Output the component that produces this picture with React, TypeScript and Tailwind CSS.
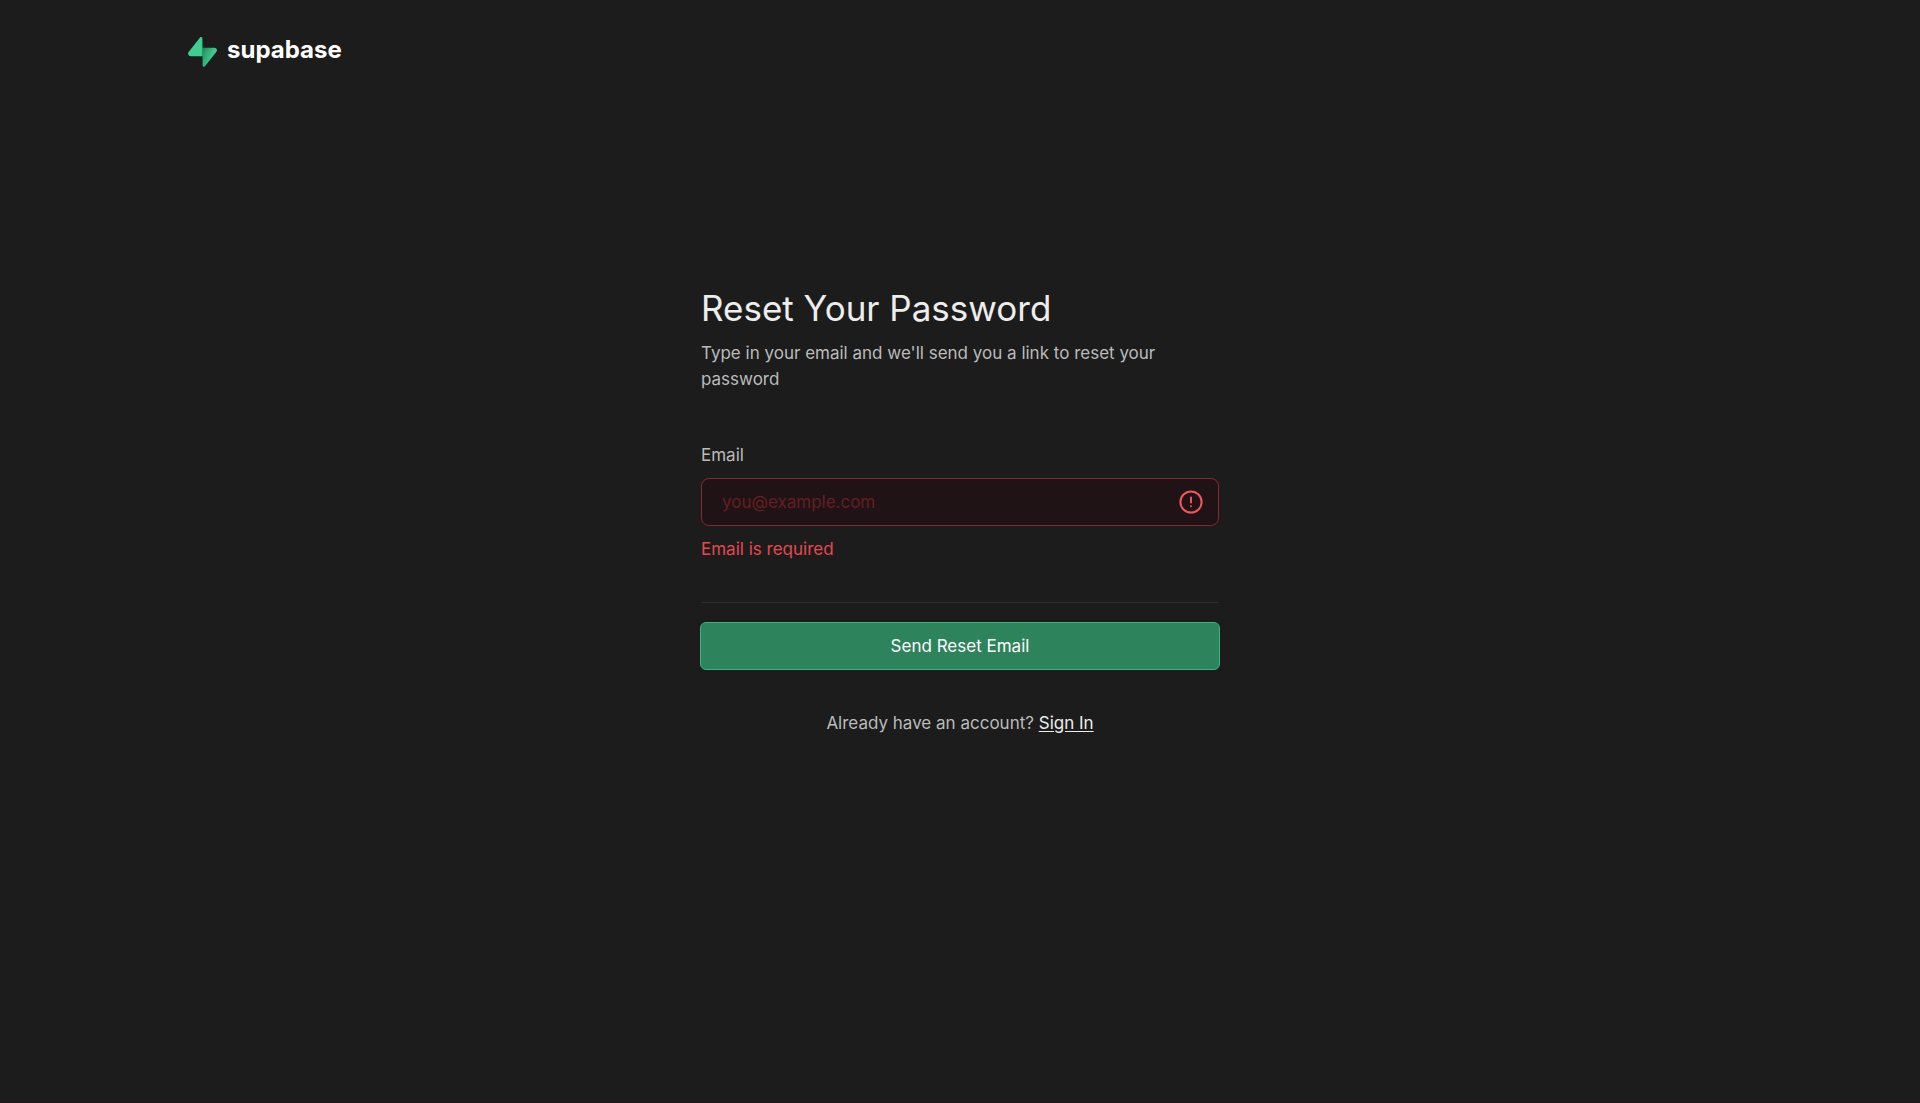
import { useId } from "react";

function Logo() {
  return (
    <a href="#" aria-label="supabase" className="flex items-end gap-[10px]">
      <svg viewBox="0 0 109 113" className="h-[30px] w-[29px]" aria-hidden="true">
        <defs>
          <linearGradient id="bolt" x1="53.97" y1="54.97" x2="94.16" y2="71.83" gradientUnits="userSpaceOnUse">
            <stop stopColor="#249361" />
            <stop offset="1" stopColor="#3ecf8e" />
          </linearGradient>
          <linearGradient id="shade" x1="36.16" y1="30.58" x2="54.48" y2="65.08" gradientUnits="userSpaceOnUse">
            <stop stopOpacity="1" />
            <stop offset="1" stopOpacity="0" />
          </linearGradient>
        </defs>
        <path fill="url(#bolt)" d="M63.7076 110.284C60.8481 113.885 55.0502 111.912 54.9813 107.314L53.9738 40.0627L99.1935 40.0627C107.384 40.0627 111.952 49.5228 106.859 55.9374L63.7076 110.284Z" />
        <path fill="url(#shade)" fillOpacity="0.2" d="M63.7076 110.284C60.8481 113.885 55.0502 111.912 54.9813 107.314L53.9738 40.0627L99.1935 40.0627C107.384 40.0627 111.952 49.5228 106.859 55.9374L63.7076 110.284Z" />
        <path fill="#3ecf8e" d="M45.317 2.07103C48.1765 -1.53037 53.9745 0.442937 54.0434 5.041L54.4849 72.2922H9.83113C1.64038 72.2922 -2.92775 62.8321 2.1655 56.4175L45.317 2.07103Z" />
      </svg>
      <span className="text-2xl leading-[35px] font-bold text-white">supabase</span>
    </a>
  );
}

export default function App() {
  const emailId = useId();
  const errorId = useId();
  return (
    <div className="flex min-h-screen flex-col border-b-2 border-[#1f171c] bg-[#1c1c1c] font-['Inter',sans-serif] text-[17px] leading-[26px] text-[#bbbbbb]">
      <header className="px-[188px] pt-8">
        <Logo />
      </header>
      <main className="mx-auto mt-[217px] w-full max-w-[520px]">
        <div className="px-px">
          <h1 className="text-[35px] leading-[48px] text-[#ededed]">Reset Your Password</h1>
          <p className="mt-2">Type in your email and we'll send you a link to reset your password</p>
        </div>
        <form noValidate className="mt-[50px]" onSubmit={(e) => e.preventDefault()}>
          <div className="px-px">
            <label htmlFor={emailId} className="block">Email</label>
            <div className="relative mt-[10px]">
              <input
                id={emailId}
                type="email"
                placeholder="you@example.com"
                aria-invalid="true"
                aria-describedby={errorId}
                className="block h-12 w-full rounded-lg border border-[#842832] bg-[#201315] pr-14 pl-5 text-[#f2555a] outline-none placeholder:text-[#671e22]"
              />
              <svg viewBox="0 0 24 24" className="pointer-events-none absolute top-3 right-4 size-6" fill="none" stroke="#f2555a" strokeWidth="2" strokeLinecap="round" strokeLinejoin="round" aria-hidden="true">
                <circle cx="12" cy="12" r="10.6" />
                <path d="M12 7.5v5M12 16.2h.01" />
              </svg>
            </div>
            <p id={errorId} className="mt-[10px] text-[#e5484d]">Email is required</p>
            <hr className="mt-10 border-[#2e2e2e]" />
          </div>
          <button type="submit" className="mt-[19px] block h-12 w-full rounded-md border border-[#3fb083] bg-[#2c835c] text-white">
            Send Reset Email
          </button>
        </form>
        <p className="mt-10 text-center">
          Already have an account?{" "}
          <a href="#" className="text-[#ededed] underline underline-offset-2">Sign In</a>
        </p>
      </main>
    </div>
  );
}
